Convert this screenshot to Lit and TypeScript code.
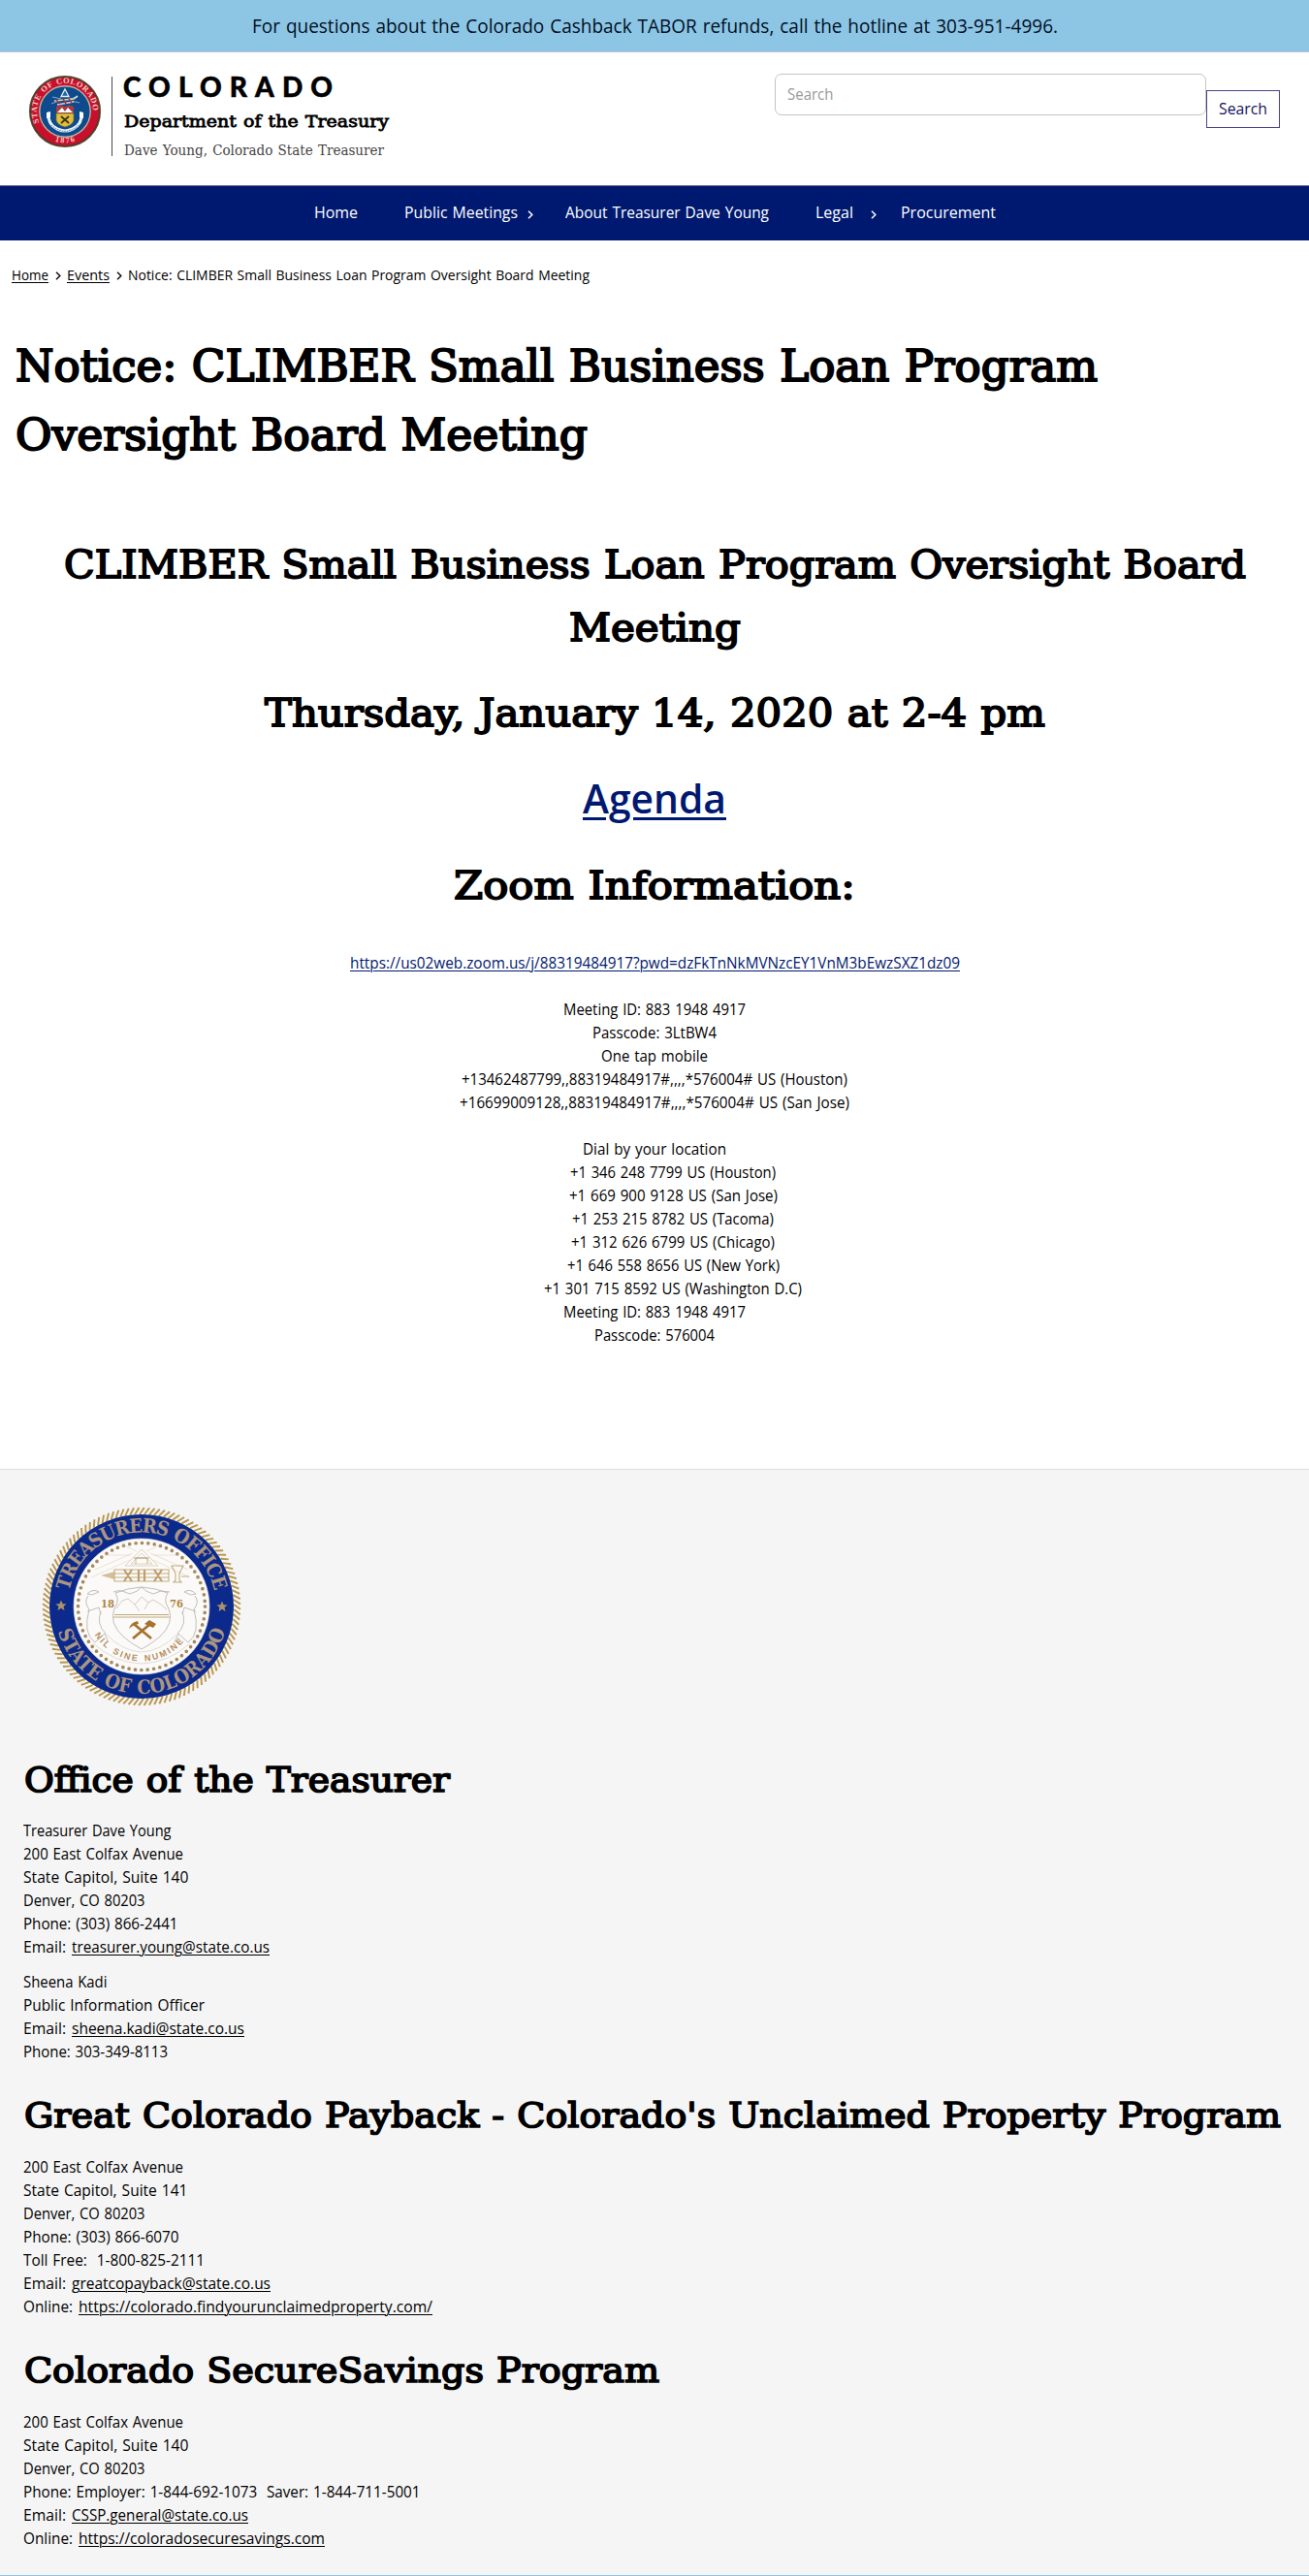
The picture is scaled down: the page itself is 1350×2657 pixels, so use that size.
import { LitElement, html, css, svg, nothing } from "lit";
import { customElement, property, query } from "lit/decorators.js";

/** One line of text set to an exact measure, in pixels. */
@customElement("fit-text")
class FitText extends LitElement {
  @property({ type: Number }) w = 0;
  @property({ type: Boolean }) link = false;
  @property({ type: Boolean }) tracked = false;
  @query(".run") run!: HTMLElement;

  static styles = css`
    :host { display: inline-block; white-space: pre; vertical-align: baseline; text-align: left; }
    .run { display: inline-block; transform-origin: 0 50%; color: inherit; text-decoration: none; }
    .link { text-decoration: underline; text-decoration-thickness: var(--rule, 1px); text-underline-offset: var(--rule-gap, 2px); }
  `;

  render() {
    const cls = this.link ? "run link" : "run";
    return html`<span class=${cls}><slot></slot></span>`;
  }

  firstUpdated() {
    const natural = this.run.getBoundingClientRect().width;
    const count = (this.textContent ?? "").length;
    if (!natural || !this.w) return;
    this.style.width = `${this.w}px`;
    if (this.tracked) {
      this.run.style.letterSpacing = `${(this.w - natural) / (count - 1)}px`;
    } else {
      this.run.style.transform = `scaleX(${this.w / natural})`;
    }
  }
}

/** Small colour seal of the state, shown in the header. */
@customElement("state-seal")
class StateSeal extends LitElement {
  static styles = css`
    :host { display: block; width: 76px; height: 76px; }
    svg { display: block; }
    .ring-text { font: 700 8.4px "Liberation Serif", serif; fill: #f3cfc4; }
  `;
  render() {
    return html`<svg width="76" height="76" viewBox="-38 -38 76 76" aria-label="Colorado state seal">
      <defs>
        <path id="arc" d="M-26.6 11.5A29 29 0 1 1 26.6 11.5" />
        <path id="low" d="M-20 25.5A32.5 32.5 0 0 0 20 25.5" />
      </defs>
      <circle r="36" fill="#c8102e" stroke="#4d3b28" stroke-width="2" />
      <circle r="36.6" fill="none" stroke="#8d7c4c" stroke-width=".8" stroke-dasharray="1 1.2" />
      <circle r="26.2" fill="#0f4a8c" stroke="#b9b79a" stroke-width="1.4" />
      <text class="ring-text"><textPath href="#arc" textLength="102">STATE OF COLORADO</textPath></text>
      <text class="ring-text" text-anchor="middle"><textPath href="#low" startOffset="50%" textLength="21">1876</textPath></text>
      <path d="M0-23L4-15.500H-4Z" fill="#1b66a8" stroke="#e7eef0" stroke-width="1.300" />
      <path d="M-13-15L-4-13M13-15L5-13M-14-8L-6-11M15-9L6-11" stroke="#a9c2cf" stroke-width=".8" />
      <path d="M-11-11L9-13L13-16M-8-7L9-10" stroke="#d9d5c5" stroke-width="1.700" fill="none" />
      <path d="M-9-12L-5-8M-2-13L1-8M4-13L7-9" stroke="#a8323a" stroke-width="1.500" />
      <path d="M-9-5Q-4-8 0-5Q4-8 9-5L9 2H-9Z" fill="#a93a45" />
      <path d="M-8 1L-3-4L0 0L3-4L8 1Z" fill="#fff" />
      <path d="M-9 2H9V9Q8 14 0 16Q-8 14-9 9Z" fill="#e0bd3d" stroke="#6b6a33" stroke-width=".7" />
      <path d="M-4 5L4 12M4 5L-4 12" stroke="#3d3413" stroke-width="1.800" />
      <path d="M-17 2Q-18 13-8 18Q0 22 8 18Q18 13 17 2" fill="none" stroke="#e8f1f7" stroke-width="3.200" />
      <path d="M-14 14Q-8 20 0 20.500Q8 20 14 14" fill="none" stroke="#2b6fa5" stroke-width=".9" stroke-dasharray="1.500 1" />
      <path d="M-19 1L-15 0L-15 6L-19 7ZM19 1L15 0L15 6L19 7Z" fill="#fff" />
    </svg>`;
  }
}

/** Large blue and gold seal of the Treasurer's office, shown in the footer. */
@customElement("office-seal")
class OfficeSeal extends LitElement {
  static styles = css`
    :host { display: block; width: 208px; height: 206px; }
    svg { display: block; }
    .ring-text { font: 700 20px "DejaVu Serif Condensed", "DejaVu Serif", serif; font-stretch: condensed; fill: #ab9583; }
    .year { font: 700 11px "DejaVu Serif", serif; fill: #b08240; }
    .motto { font: 700 9px "Liberation Sans", sans-serif; fill: #b58f63; }
  `;
  render() {
    const ropes = Array.from({ length: 120 }, (_, i) => i * 3);
    const star = "M0-5.500L1.600-1.700L5.500-1.500L2.500 1L3.500 5L0 2.800L-3.500 5L-2.500 1L-5.500-1.500L-1.600-1.700Z";
    return html`<svg width="208" height="206" viewBox="-104 -103 208 206" aria-label="Treasurers Office seal">
      <defs>
        <path id="top" d="M-76.500 0A76.500 76.500 0 0 1 76.500 0" />
        <path id="bottom" d="M-90 0A90 90 0 0 0 90 0" />
        <path id="motto" d="M-52 22A56.500 56.500 0 0 0 52 22" />
      </defs>
      <circle r="99" fill="#fbf6ea" />
      ${ropes.map((a) => svg`<path d="M-2-95L2.800-102" stroke="#b69553" stroke-width="1.900" transform=${`rotate(${a})`} />`)}
      <circle r="95" fill="#0b2a8c" />
      <circle r="70" fill="#fbfaf9" stroke="#d9dbe6" stroke-width=".7" />
      <circle r="65.500" fill="none" stroke="#a58a60" stroke-width="3.700" stroke-dasharray="0 6.430" stroke-linecap="round" />
      <text class="ring-text"><textPath href="#top" startOffset="16" textLength="208">TREASURERS OFFICE</textPath></text>
      <text class="ring-text"><textPath href="#bottom" startOffset="26" textLength="231">STATE OF COLORADO</textPath></text>
      <path d=${star} fill="#ad9366" transform="translate(-83 -1)" />
      <path d=${star} fill="#ad9366" transform="translate(83 0)" />
      <g fill="none" stroke="#d8c9ae" stroke-width=".8">
        <path d="M-9-55L-48-38M-12-53L-38-53M-5-57L-20-64M9-55L48-38M12-53L38-53M5-57L20-64M-12-48L-52-30M12-48L50-30" opacity=".6" />
        <path d="M0-59L17-42H-17ZM0-55L11-44H-11Z" />
        <path d="M-6-44V-50H6V-44M-8-50H8" stroke="#b79d78" />
      </g>
      <path d="M-42-32L-28-36V-28Z" fill="#d3c09b" />
      <g fill="none" stroke="#c4ab7e" stroke-width="1.100">
        <path d="M-28-38H28V-26H-28ZM-28-34H28M-28-30H28" />
        <path d="M-18-38L-10-26M-10-38L-18-26M13-38L21-26M21-38L13-26M-3-38V-26M3-38V-26" stroke="#bd9f6b" stroke-width="2.200" />
        <path d="M31-42H43L39-34V-27L41-25H33L35-27V-34ZM41-31H49" />
      </g>
      <g fill="none" stroke="#b9b8b3" stroke-width=".9">
        <path d="M-27-14Q-15-19 0-20Q15-19 27-14Q22-6 28 2Q34 17 19 31Q11 38 0 44Q-11 38-19 31Q-34 17-28 2Q-22-6-27-14Z" />
        <path d="M-29-15Q-24-17-20-16L-12-13Q-4-15 0-20Q4-15 12-13L20-16L29-15" />
        <path d="M-26 2L-20-6L-14-8L-7-2L0-10L7-4L12-7L20-2L26 3M-7-2L-2 5M7-4L3 3" stroke="#cfc7ba" />
        <path d="M-56-13Q-50-19-44-15L-51-12ZM-55-11Q-60-5-54 3Q-61 28-48 37M-42 5Q-47 18-37 28M-56 5L-44 1L-42 8M-48 37L-38 28L-34 37M56-13Q50-19 44-15L51-12ZM55-11Q60-5 54 3Q61 28 48 37M42 5Q47 18 37 28M56 5L44 1L42 8M48 37L38 28L34 37" />
        <path d="M-50 38Q-28 58 0 59Q28 58 50 38M-36 29Q-20 46 0 47Q20 46 36 29" stroke="#ddd8d0" />
      </g>
      <path d="M-28 8.500H28M-29 11H29" stroke="#c1a77b" stroke-width="1.200" />
      <path d="M-9 33L9 18M-8 18L10 33" stroke="#a7712e" stroke-width="2.800" />
      <path d="M-13 23Q-11 16-4 15L-3 18Q-9 19-13 23ZM3 18L8 14L15 18L12 22Z" fill="#a7712e" />
      <text class="year" x="-42" y="1" textLength="14" lengthAdjust="spacingAndGlyphs">18</text>
      <text class="year" x="29" y="1" textLength="14" lengthAdjust="spacingAndGlyphs">76</text>
      <text class="motto"><textPath href="#motto" startOffset="8" textLength="107">NIL SINE NUMINE</textPath></text>
    </svg>`;
  }
}

type Piece = { t: string; w: number; link?: boolean; gap?: number };
const p = (t: string, w: number): Piece[] => [{ t, w }];
const labelled = (label: string, lw: number, t: string, w: number): Piece[] => [
  { t: label, w: lw, gap: 6 },
  { t, w, link: true },
];

const dialTop: [string, number][] = [
  ["Meeting ID: 883 1948 4917", 188],
  ["Passcode: 3LtBW4", 128],
  ["One tap mobile", 110],
  ["+13462487799,,88319484917#,,,,*576004# US (Houston)", 398],
  ["+16699009128,,88319484917#,,,,*576004# US (San Jose)", 402],
];
const numbers: [string, number][] = [
  ["+1 346 248 7799 US (Houston)", 212],
  ["+1 669 900 9128 US (San Jose)", 215],
  ["+1 253 215 8782 US (Tacoma)", 208],
  ["+1 312 626 6799 US (Chicago)", 210],
  ["+1 646 558 8656 US (New York)", 219],
  ["+1 301 715 8592 US (Washington D.C)", 266],
];

const office: Piece[][] = [
  p("Treasurer Dave Young", 152.5),
  p("200 East Colfax Avenue", 165),
  p("State Capitol, Suite 140", 170.5),
  p("Denver, CO 80203", 125.5),
  p("Phone: (303) 866-2441", 159.5),
  labelled("Email:", 44, "treasurer.young@state.co.us", 204),
];
const press: Piece[][] = [
  p("Sheena Kadi", 86.5),
  p("Public Information Officer", 187),
  labelled("Email:", 44, "sheena.kadi@state.co.us", 178),
  p("Phone: 303-349-8113", 149),
];
const payback: Piece[][] = [
  p("200 East Colfax Avenue", 165),
  p("State Capitol, Suite 141", 169.5),
  p("Denver, CO 80203", 125.5),
  p("Phone: (303) 866-6070", 160.5),
  p("Toll Free:\u00a0 1-800-825-2111", 187),
  labelled("Email:", 44, "greatcopayback@state.co.us", 205),
  labelled("Online:", 51, "https://colorado.findyourunclaimedproperty.com/", 365),
];
const savings: Piece[][] = [
  p("200 East Colfax Avenue", 165),
  p("State Capitol, Suite 140", 170.5),
  p("Denver, CO 80203", 125.5),
  p("Phone: Employer: 1-844-692-1073\u00a0 Saver: 1-844-711-5001", 409.5),
  labelled("Email:", 44, "CSSP.general@state.co.us", 182),
  labelled("Online:", 51, "https://coloradosecuresavings.com", 254),
];

@customElement("app-root")
class AppRoot extends LitElement {
  static styles = css`
    :host {
      display: block; background: #fff; color: #000;
      font: 16px/24px "Open Sans", "Noto Sans", sans-serif;
      --slab: "DejaVu Serif", serif;
      word-spacing: 1px;
    }
    * { box-sizing: border-box; }
    h1, h2, p { margin: 0; }
    .notice { height: 54px; display: flex; justify-content: center; background: #8dc5e5; border-bottom: 1px solid #b3c3d4; font-size: 19.4px; line-height: 53px; color: #00101f; }
    .header { height: 137px; display: flex; justify-content: space-between; padding: 0 30px 0 29px; }
    .brand { display: flex; padding-top: 24px; }
    .brand-seal { margin-top: -1px; }
    .bar { width: 1px; height: 82px; margin: 1px 12px 0 10px; background: #4a4a4a; }
    .names { display: flex; flex-direction: column; }
    .state { font: 900 28px/28px Lato, sans-serif; margin: -3px 0 0 -1px; -webkit-text-stroke: .5px #000; }
    .dept { font: 400 17.500px/24px var(--slab); -webkit-text-stroke: .8px #000; margin-top: 10px; }
    .person { font: 400 15px/24px var(--slab); color: #444; margin-top: 6px; }
    .search { display: flex; padding-top: 22px; }
    .field { width: 445px; height: 43px; border: 1.500px solid #c4c4c4; border-radius: 7px; padding: 0 12px; line-height: 41px; color: #999; }
    .button { width: 76px; height: 39px; margin-top: 17px; border: 1px solid #4b4384; text-align: center; line-height: 37px; color: #15125c; background: #fff; }
    .nav { height: 57px; display: flex; background: #001970; border-top: 1px solid #666680; color: #fff; padding: 0 0 2px 324px; line-height: 54px; }
    .nav-item { display: flex; align-items: center; }
    .i1 { margin-right: 48px; }
    .i2 { margin-right: 32.500px; }
    .i3 { margin-right: 48.500px; }
    .i4 { margin-right: 24.500px; }
    .chev { display: block; margin: 5px 0 0 10px; }
    .i4 .chev { margin-left: 18px; }
    .crumbs { display: flex; align-items: center; height: 24px; margin-top: 23px; padding-left: 12px; font-size: 14.900px; gap: 6.600px; }
    .crumb-chev { display: block; margin-top: 2px; }
    .title { font: 400 44px/71px var(--slab); -webkit-text-stroke: 2px #000; margin-top: 47px; padding-left: 16px; display: flex; flex-direction: column; }
    .body { text-align: center; padding-top: 66px; }
    .sub { font: 400 39.500px/65px var(--slab); -webkit-text-stroke: 1.800px #000; margin-bottom: 22px; }
    .sub div { height: 65px; }
    .agenda { font: 600 42px/65px "Open Sans", sans-serif; color: #001970; height: 65px; margin-bottom: 26px; --rule: 3px; --rule-gap: 4px; }
    .first { margin-bottom: 23px; }
    .zoom { margin-bottom: 35px; }
    .join { color: #001970; height: 24px; margin-bottom: 24px; }
    .line { height: 24px; }
    .blank { height: 24px; }
    .indent { padding-left: 38px; }
    .footer { margin-top: 126px; height: 1142px; background: #f5f5f5; border-top: 1px solid #ddd; border-bottom: 1px solid #8dc5e5; padding: 38px 24px 0; }
    .foot-seal { margin-left: 18px; }
    .foot-title { font: 400 36px/56px var(--slab); -webkit-text-stroke: 1.700px #000; height: 56px; padding-left: 1px; }
    .t1 { margin-top: 48px; }
    .t2 { margin-top: 26px; }
    .block { margin-top: 13px; }
    .b1 { margin-top: 12px; }
    .row { height: 24px; display: flex; }
    .gap { width: 6px; }
  `;

  chevron(cls: string, color: string) {
    return html`<svg class=${cls} width="6" height="9" viewBox="0 0 6 9"><path d="M1 .8L4.800 4.500L1 8.200" fill="none" stroke=${color} stroke-width="1.500" /></svg>`;
  }

  block(rows: Piece[][], cls = "") {
    return html`<div class="block ${cls}">${rows.map(
      (row) => html`<div class="row">${row.map(
        (c) => html`<fit-text .w=${c.w} .link=${!!c.link}>${c.t}</fit-text>${c.gap ? html`<span class="gap"></span>` : nothing}`
      )}</div>`
    )}</div>`;
  }

  centred(rows: [string, number][], cls = "") {
    return rows.map(([t, w]) => html`<div class="line ${cls}"><fit-text .w=${w}>${t}</fit-text></div>`);
  }

  render() {
    return html`
      <div class="notice"><fit-text .w=${831}>For questions about the Colorado Cashback TABOR refunds, call the hotline at 303-951-4996.</fit-text></div>
      <header class="header">
        <div class="brand">
          <state-seal class="brand-seal"></state-seal>
          <div class="bar"></div>
          <div class="names">
            <fit-text class="state" tracked .w=${216}>COLORADO</fit-text>
            <fit-text class="dept" .w=${273}>Department of the Treasury</fit-text>
            <fit-text class="person" .w=${268}>Dave Young, Colorado State Treasurer</fit-text>
          </div>
        </div>
        <div class="search">
          <div class="field"><fit-text .w=${47.5}>Search</fit-text></div>
          <div class="button"><fit-text .w=${50}>Search</fit-text></div>
        </div>
      </header>
      <nav class="nav">
        <div class="nav-item i1"><fit-text .w=${45}>Home</fit-text></div>
        <div class="nav-item i2"><fit-text .w=${117}>Public Meetings</fit-text>${this.chevron("chev", "#fff")}</div>
        <div class="nav-item i3"><fit-text .w=${210}>About Treasurer Dave Young</fit-text></div>
        <div class="nav-item i4"><fit-text .w=${39}>Legal</fit-text>${this.chevron("chev", "#fff")}</div>
        <div class="nav-item"><fit-text .w=${98}>Procurement</fit-text></div>
      </nav>
      <div class="crumbs">
        <fit-text link .w=${38}>Home</fit-text>${this.chevron("crumb-chev", "#111")}
        <fit-text link .w=${44}>Events</fit-text>${this.chevron("crumb-chev", "#111")}
        <fit-text .w=${476}>Notice: CLIMBER Small Business Loan Program Oversight Board Meeting</fit-text>
      </div>
      <h1 class="title">
        <fit-text .w=${1116}>Notice: CLIMBER Small Business Loan Program</fit-text>
        <fit-text .w=${590}>Oversight Board Meeting</fit-text>
      </h1>
      <main class="body">
        <h2 class="sub first">
          <div><fit-text .w=${1219}>CLIMBER Small Business Loan Program Oversight Board</fit-text></div>
          <div><fit-text .w=${177}>Meeting</fit-text></div>
        </h2>
        <h2 class="sub"><div><fit-text .w=${805}>Thursday, January 14, 2020 at 2-4 pm</fit-text></div></h2>
        <div class="agenda"><fit-text link .w=${148}>Agenda</fit-text></div>
        <h2 class="sub zoom"><div><fit-text .w=${414}>Zoom Information:</fit-text></div></h2>
        <div class="join"><fit-text link .w=${629}>https://us02web.zoom.us/j/88319484917?pwd=dzFkTnNkMVNzcEY1VnM3bEwzSXZ1dz09</fit-text></div>
        ${this.centred(dialTop)}
        <div class="blank"></div>
        ${this.centred([["Dial by your location", 148]])}
        ${this.centred(numbers, "indent")}
        ${this.centred([["Meeting ID: 883 1948 4917", 188], ["Passcode: 576004", 124]])}
      </main>
      <footer class="footer">
        <office-seal class="foot-seal"></office-seal>
        <h2 class="foot-title t1"><fit-text .w=${439}>Office of the Treasurer</fit-text></h2>
        ${this.block(office, "b1")}
        ${this.block(press, "b1")}
        <h2 class="foot-title t2"><fit-text .w=${1296}>Great Colorado Payback - Colorado's Unclaimed Property Program</fit-text></h2>
        ${this.block(payback)}
        <h2 class="foot-title t2"><fit-text .w=${655}>Colorado SecureSavings Program</fit-text></h2>
        ${this.block(savings)}
      </footer>
    `;
  }
}
